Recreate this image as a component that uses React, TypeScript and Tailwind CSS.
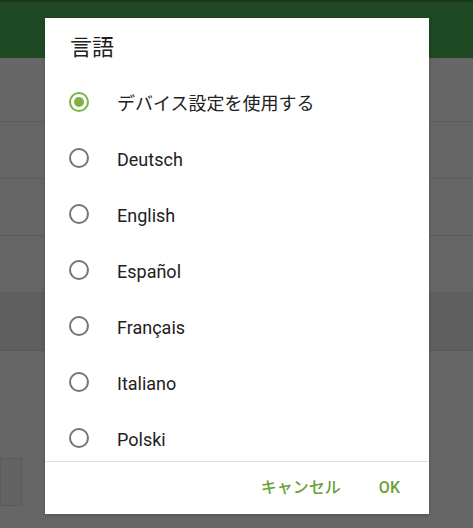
import React from "react";

const languages = [
  "デバイス設定を使用する",
  "Deutsch",
  "English",
  "Español",
  "Français",
  "Italiano",
  "Polski",
];

function Radio({ checked }: { checked: boolean }) {
  return (
    <span
      className={
        "flex h-[20px] w-[20px] shrink-0 items-center justify-center rounded-full border-2 " +
        (checked ? "border-[#7cb342]" : "border-[#757575]")
      }
    >
      {checked && <span className="h-[10px] w-[10px] rounded-full bg-[#7cb342]" />}
    </span>
  );
}

export default function App() {
  const font = {
    fontFamily: 'Roboto, "Noto Sans CJK JP", sans-serif',
  };
  return (
    <div
      className="relative h-[528px] w-[473px] overflow-hidden bg-[#666666]"
      style={font}
    >
      {/* screen behind the dimmed overlay */}
      <div className="flex flex-col">
        <div className="h-[58px] border-t-2 border-[#1a361c] bg-[#1f4922]" />
        <div className="h-[64px] border-b border-[#5c5c5c]" />
        <div className="h-[57px] border-b border-[#5c5c5c]" />
        <div className="h-[57px] border-b border-[#5c5c5c]" />
        <div className="h-[57px] border-b border-[#5c5c5c]" />
        <div className="h-[58px] border-b border-[#5a5a5a] bg-[#5f5f5f]" />
        <div className="pt-[107px]">
          <div className="h-[48px] w-[22px] border border-[#5a5a5a] bg-[#636363]" />
        </div>
      </div>

      {/* language dialog */}
      <div className="absolute left-[45px] top-[18px] flex h-[496px] w-[384px] flex-col bg-white shadow-[0_1px_4px_rgba(0,0,0,0.2)]">
        <div className="flex h-[56px] items-center pl-[25px] pt-[2px] text-[22px] text-[#212121]">
          言語
        </div>
        <div className="h-[387px] overflow-hidden">
          {languages.map((lang, i) => (
            <div key={lang} className="flex h-[56px] items-center pl-[24px]">
              <Radio checked={i === 0} />
              <span className="ml-[28px] pt-[2px] text-[18px] text-[#212121]">{lang}</span>
            </div>
          ))}
        </div>
        <div className="flex flex-1 items-center justify-end gap-[38px] border-t border-[#e0e0e0] pr-[29px] text-[16px] font-medium text-[#6a9f3a]">
          <span>キャンセル</span>
          <span>OK</span>
        </div>
      </div>
    </div>
  );
}
